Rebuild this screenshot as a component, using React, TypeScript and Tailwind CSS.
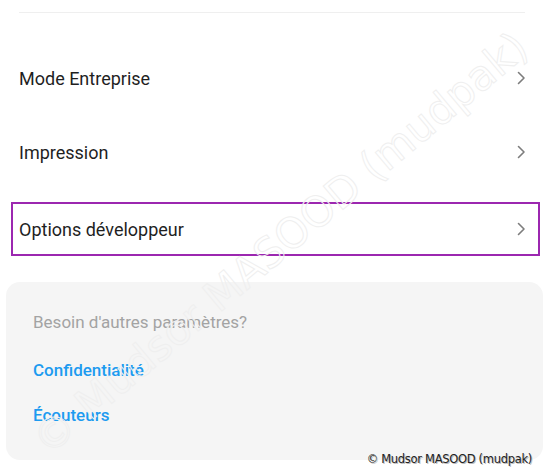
const rows = ["Mode Entreprise", "Impression"]

function Chevron() {
  return (
    <svg width="10" height="16" viewBox="0 0 10 16" className="shrink-0">
      <path d="M2.5 2.5l5.5 5.5-5.5 5.5" fill="none" stroke="#7d7d7d" strokeWidth="1.6" strokeLinecap="round" strokeLinejoin="round" />
    </svg>
  )
}

export default function App() {
  return (
    <div className="relative h-[474px] w-[549px] overflow-hidden bg-white font-['Roboto',sans-serif]">
      {/* top divider */}
      <div className="ml-[19px] mt-[12px] h-px w-[506px] bg-[#efefef]" />

      {/* settings rows */}
      <div className="mt-[28px] flex flex-col">
        {rows.map((label) => (
          <div key={label} className="flex h-[74px] items-center justify-between pl-[19px] pr-[23px]">
            <span className="text-[18px] text-[#1f1f1f]">{label}</span>
            <Chevron />
          </div>
        ))}
        <div className="ml-[11px] mr-[9px] mt-[13px] flex h-[54px] items-center justify-between border-2 border-[#9c27b0] pl-[6px] pr-[12px]">
          <span className="text-[18px] text-[#1f1f1f]">Options développeur</span>
          <Chevron />
        </div>
      </div>

      {/* more settings card */}
      <div className="mx-[6px] mt-[26px] h-[178px] rounded-[14px] bg-[#f5f5f5] px-[27px] pt-[28px]">
        <p className="text-[17px] text-[#a3a3a3]">Besoin d'autres paramètres?</p>
        <p className="mt-[22px] text-[17px] font-medium text-[#1d9bf0]">Confidentialité</p>
        <p className="mt-[20px] text-[17px] font-medium text-[#1d9bf0]">Écouteurs</p>
      </div>

      {/* diagonal watermark */}
      <div className="pointer-events-none absolute left-[-60px] top-[212px] w-[680px] -rotate-[40deg] text-center font-['DejaVu_Sans',sans-serif] text-[42px] whitespace-nowrap text-transparent [-webkit-text-stroke:1px_#efefef]">
        © Mudsor MASOOD (mudpak)
      </div>

      {/* copyright */}
      <div className="absolute right-[17px] bottom-[6px] font-['DejaVu_Sans',sans-serif] text-[11.5px] tracking-[-0.3px] text-[#222] [text-shadow:1px_1px_0_#bbb]">
        © Mudsor MASOOD (mudpak)
      </div>
    </div>
  )
}
